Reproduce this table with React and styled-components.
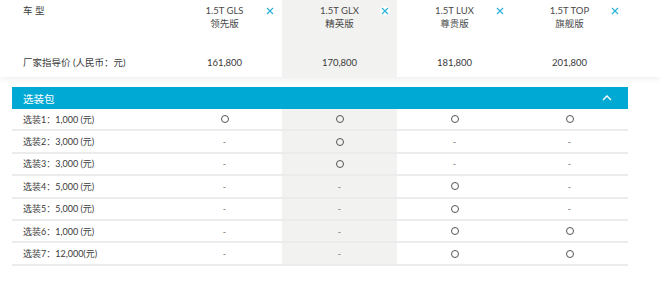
import React from "react";
import styled, { createGlobalStyle } from "styled-components";

const Global = createGlobalStyle`
  html, body { margin: 0; padding: 0; background: #fff; }
  body { font-family: Lato, "Noto Sans CJK SC", sans-serif; color: #3c3c3c; }
`;

const COLS = "155px 115px 115px 115px 115px";

const Header = styled.div`
  height: 77px;
  background: #fff;
  box-shadow: 0 2px 6px rgba(0, 0, 0, 0.07);
  position: relative;
  z-index: 1;
`;

const HeadGrid = styled.div`
  display: grid;
  grid-template-columns: 167px 115px 115px 115px 115px;
  height: 100%;
`;

const HeadLabelCol = styled.div`
  display: flex;
  flex-direction: column;
  justify-content: space-between;
  padding: 4px 0 8px 23px;
  font-size: 9.5px;
  line-height: 13px;
  color: #3a3a3a;
`;

const HeadCol = styled.div`
  position: relative;
  display: flex;
  flex-direction: column;
  justify-content: space-between;
  align-items: center;
  padding: 4px 0 8px;
  font-size: 9.5px;
  line-height: 13px;
  color: #3a3a3a;
  background: ${(p) => (p.$hl ? "#f2f2f1" : "#fff")};
`;

const ModelName = styled.div`
  text-align: center;
  color: #4a4a4a;
`;

const Close = styled.span`
  position: absolute;
  top: 6px;
  right: 7px;
  width: 10px;
  height: 10px;
  display: flex;
  align-items: center;
  justify-content: center;
  border-radius: 50%;
  background: ${(p) => (p.$hl ? "#fff" : "transparent")};
`;

const Section = styled.div`
  margin: 10px 0 0 12px;
  width: 616px;
`;

const Bar = styled.div`
  height: 22px;
  background: #00a9d3;
  color: #fff;
  display: flex;
  align-items: center;
  justify-content: space-between;
  padding: 0 16px 0 11px;
  font-size: 10.5px;
`;

const Row = styled.div`
  display: grid;
  grid-template-columns: ${COLS};
  height: 22.4px;
  box-sizing: border-box;
  border-bottom: 2px solid #ececec;
  font-size: 9px;
`;

const Label = styled.div`
  display: flex;
  align-items: center;
  padding-left: 11px;
  color: #3a3a3a;
`;

const Cell = styled.div`
  display: flex;
  align-items: center;
  justify-content: center;
  background: ${(p) => (p.$hl ? "#f2f2f1" : "transparent")};
  color: #777;
`;

const Circle = styled.span`
  width: 6px;
  height: 6px;
  border: 1px solid #555;
  border-radius: 50%;
`;

const XIcon = () => (
  <svg width="8" height="8" viewBox="0 0 8 8">
    <path d="M1 1L7 7M7 1L1 7" stroke="#2db2d8" strokeWidth="1.2" fill="none" />
  </svg>
);

const Chevron = () => (
  <svg width="10" height="6" viewBox="0 0 10 6">
    <path d="M1 5L5 1L9 5" stroke="#fff" strokeWidth="1.4" fill="none" />
  </svg>
);

const models = [
  { name: "1.5T GLS", sub: "领先版", price: "161,800" },
  { name: "1.5T GLX", sub: "精英版", price: "170,800", hl: true },
  { name: "1.5T LUX", sub: "尊贵版", price: "181,800" },
  { name: "1.5T TOP", sub: "旗舰版", price: "201,800" },
];

const rows = [
  ["选装1：1,000 (元)", [1, 1, 1, 1]],
  ["选装2：3,000 (元)", [0, 1, 0, 0]],
  ["选装3：3,000 (元)", [0, 1, 0, 0]],
  ["选装4：5,000 (元)", [0, 0, 1, 0]],
  ["选装5：5,000 (元)", [0, 0, 1, 0]],
  ["选装6：1,000 (元)", [0, 0, 1, 1]],
  ["选装7：12,000(元)", [0, 0, 1, 1]],
];

export default function App() {
  return (
    <>
      <Global />
      <Header>
        <HeadGrid>
          <HeadLabelCol>
            <div>车 型</div>
            <div>厂家指导价 (人民币：元)</div>
          </HeadLabelCol>
          {models.map((m) => (
            <HeadCol key={m.name} $hl={m.hl}>
              <ModelName>
                {m.name}
                <br />
                {m.sub}
              </ModelName>
              <div>{m.price}</div>
              <Close $hl={m.hl}>
                <XIcon />
              </Close>
            </HeadCol>
          ))}
        </HeadGrid>
      </Header>
      <Section>
        <Bar>
          <span>选装包</span>
          <Chevron />
        </Bar>
        {rows.map(([label, vals]) => (
          <Row key={label}>
            <Label>{label}</Label>
            {vals.map((v, i) => (
              <Cell key={i} $hl={i === 1}>
                {v ? <Circle /> : "-"}
              </Cell>
            ))}
          </Row>
        ))}
      </Section>
    </>
  );
}
